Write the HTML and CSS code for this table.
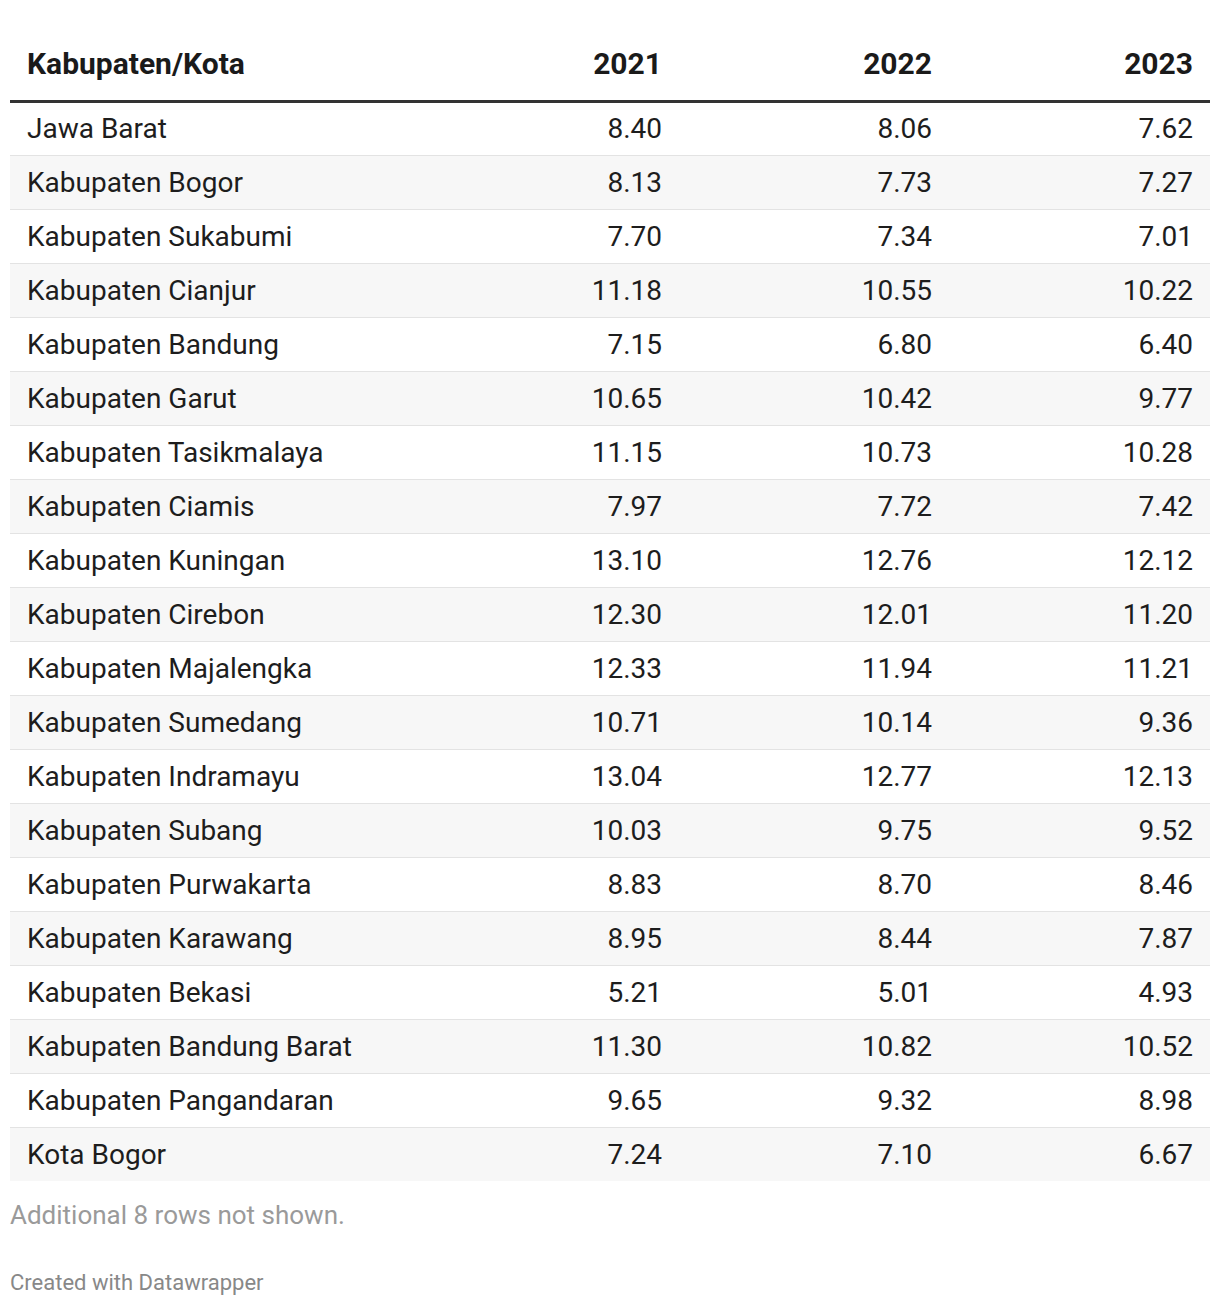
FILE: index.html
```html
<!DOCTYPE html>
<html>
<head>
<meta charset="utf-8">
<link rel="stylesheet" href="styles.css">
</head>
<body>
<div class="wrap">
<table class="tbl">
<colgroup><col class="c1"><col class="c2"><col class="c3"><col class="c4"></colgroup>
<thead><tr><th class="name">Kabupaten/Kota</th><th>2021</th><th>2022</th><th>2023</th></tr></thead>
<tbody>
<tr><td class="name">Jawa Barat</td><td>8.40</td><td>8.06</td><td>7.62</td></tr>
<tr><td class="name">Kabupaten Bogor</td><td>8.13</td><td>7.73</td><td>7.27</td></tr>
<tr><td class="name">Kabupaten Sukabumi</td><td>7.70</td><td>7.34</td><td>7.01</td></tr>
<tr><td class="name">Kabupaten Cianjur</td><td>11.18</td><td>10.55</td><td>10.22</td></tr>
<tr><td class="name">Kabupaten Bandung</td><td>7.15</td><td>6.80</td><td>6.40</td></tr>
<tr><td class="name">Kabupaten Garut</td><td>10.65</td><td>10.42</td><td>9.77</td></tr>
<tr><td class="name">Kabupaten Tasikmalaya</td><td>11.15</td><td>10.73</td><td>10.28</td></tr>
<tr><td class="name">Kabupaten Ciamis</td><td>7.97</td><td>7.72</td><td>7.42</td></tr>
<tr><td class="name">Kabupaten Kuningan</td><td>13.10</td><td>12.76</td><td>12.12</td></tr>
<tr><td class="name">Kabupaten Cirebon</td><td>12.30</td><td>12.01</td><td>11.20</td></tr>
<tr><td class="name">Kabupaten Majalengka</td><td>12.33</td><td>11.94</td><td>11.21</td></tr>
<tr><td class="name">Kabupaten Sumedang</td><td>10.71</td><td>10.14</td><td>9.36</td></tr>
<tr><td class="name">Kabupaten Indramayu</td><td>13.04</td><td>12.77</td><td>12.13</td></tr>
<tr><td class="name">Kabupaten Subang</td><td>10.03</td><td>9.75</td><td>9.52</td></tr>
<tr><td class="name">Kabupaten Purwakarta</td><td>8.83</td><td>8.70</td><td>8.46</td></tr>
<tr><td class="name">Kabupaten Karawang</td><td>8.95</td><td>8.44</td><td>7.87</td></tr>
<tr><td class="name">Kabupaten Bekasi</td><td>5.21</td><td>5.01</td><td>4.93</td></tr>
<tr><td class="name">Kabupaten Bandung Barat</td><td>11.30</td><td>10.82</td><td>10.52</td></tr>
<tr><td class="name">Kabupaten Pangandaran</td><td>9.65</td><td>9.32</td><td>8.98</td></tr>
<tr><td class="name">Kota Bogor</td><td>7.24</td><td>7.10</td><td>6.67</td></tr>
</tbody>
</table>
<p class="note">Additional 8 rows not shown.</p>
<p class="credit">Created with Datawrapper</p>
</div>
</body>
</html>
```
FILE: styles.css
```css
html, body { margin: 0; padding: 0; background: #fff; }
body { font-family: Roboto, "Noto Sans", sans-serif; color: #1d1d1d; }
.wrap { padding: 0 10px; }
.tbl { width: 1200px; border-collapse: collapse; table-layout: fixed; margin-top: 30px; }
.c1 { width: 399px; }
.c2 { width: 270px; }
.c3 { width: 270px; }
.c4 { width: 261px; }
.tbl th { font-weight: 700; font-size: 30px; text-align: right; padding: 0 17px 2px; height: 71px; box-sizing: border-box; border-bottom: 3px solid #333; color: #1a1a1a; }
.tbl td { font-size: 28px; text-align: right; padding: 0 17px; height: 54px; box-sizing: border-box; border-bottom: 1px solid #e3e3e3; }
.tbl .name { text-align: left; }
.tbl tbody tr:nth-child(even) { background: #f7f7f7; }
.tbl tbody tr:last-child td { border-bottom: none; }
.note { margin: 19px 0 0; font-size: 26px; color: #9a9a9a; }
.credit { margin: 40px 0 0; font-size: 22px; color: #888; }
```
